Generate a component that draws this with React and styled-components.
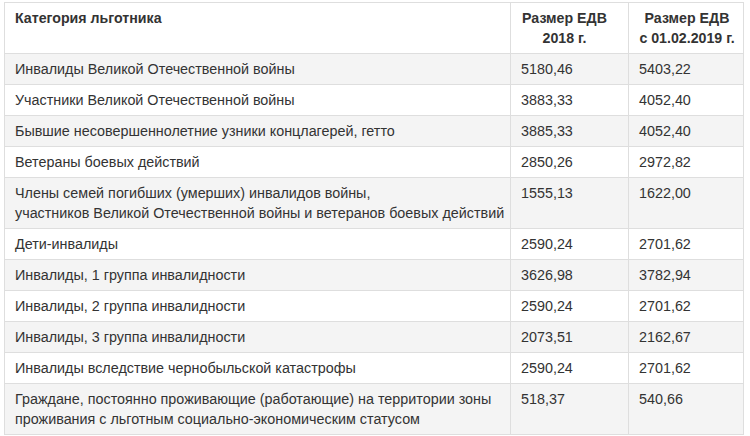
import React from 'react'
import styled, { createGlobalStyle } from 'styled-components';

const rows = [
  ['Инвалиды Великой Отечественной войны', '5180,46', '5403,22'],
  ['Участники Великой Отечественной войны', '3883,33', '4052,40'],
  ['Бывшие несовершеннолетние узники концлагерей, гетто', '3885,33', '4052,40'],
  ['Ветераны боевых действий', '2850,26', '2972,82'],
  ['Члены семей погибших (умерших) инвалидов войны,\nучастников Великой Отечественной войны и ветеранов боевых действий', '1555,13', '1622,00'],
  ['Дети-инвалиды', '2590,24', '2701,62'],
  ['Инвалиды, 1 группа инвалидности', '3626,98', '3782,94'],
  ['Инвалиды, 2 группа инвалидности', '2590,24', '2701,62'],
  ['Инвалиды, 3 группа инвалидности', '2073,51', '2162,67'],
  ['Инвалиды вследствие чернобыльской катастрофы', '2590,24', '2701,62'],
  ['Граждане, постоянно проживающие (работающие) на территории зоны\nпроживания с льготным социально-экономическим статусом', '518,37', '540,66'],
];

const App = () => {
  return (
    <>
      <GlobalStyle />
      <Page>
        <Table>
          <colgroup>
            <col style={{ width: 506 }} />
            <col style={{ width: 118 }} />
            <col style={{ width: 115 }} />
          </colgroup>
          <thead>
            <tr>
              <HeadCell>Категория льготника</HeadCell>
              <HeadCell $center $shift>Размер ЕДВ<br />2018 г.</HeadCell>
              <HeadCell $center>Размер ЕДВ<br />с 01.02.2019 г.</HeadCell>
            </tr>
          </thead>
          <tbody>
            {rows.map((row, i) => (
              <Row key={i} $odd={i % 2 === 0}>
                <Cell>{row[0]}</Cell>
                <Cell>{row[1]}</Cell>
                <Cell>{row[2]}</Cell>
              </Row>
            ))}
          </tbody>
        </Table>
      </Page>
    </>
  )
}

const GlobalStyle = createGlobalStyle`
    body {
        margin: 0;
        background: #fff;
        font-family: "Liberation Sans", Arial, sans-serif;
    }
`;

const Page = styled.div`
    padding: 2px 0 0 4px;
`;

const Table = styled.table`
    border-collapse: collapse;
    table-layout: fixed;
    width: 740px;
    color: #333;
    font-size: 14.35px;
    line-height: 20px;
`;

const HeadCell = styled.th`
    border: 1px solid #dedede;
    padding: ${p => p.$shift ? '5px 16px 5px 6px' : '5px 8px 5px 10px'};
    vertical-align: top;
    text-align: ${p => p.$center ? 'center' : 'left'};
    font-weight: bold;
    font-size: 14.2px;
    background: #fff;
`;

const Row = styled.tr`
    background: ${p => p.$odd ? '#f4f4f4' : '#fff'};
`;

const Cell = styled.td`
    border: 1px solid #dedede;
    padding: 5px 4px 5px 10px;
    vertical-align: top;
    white-space: pre;
`;

export default App
